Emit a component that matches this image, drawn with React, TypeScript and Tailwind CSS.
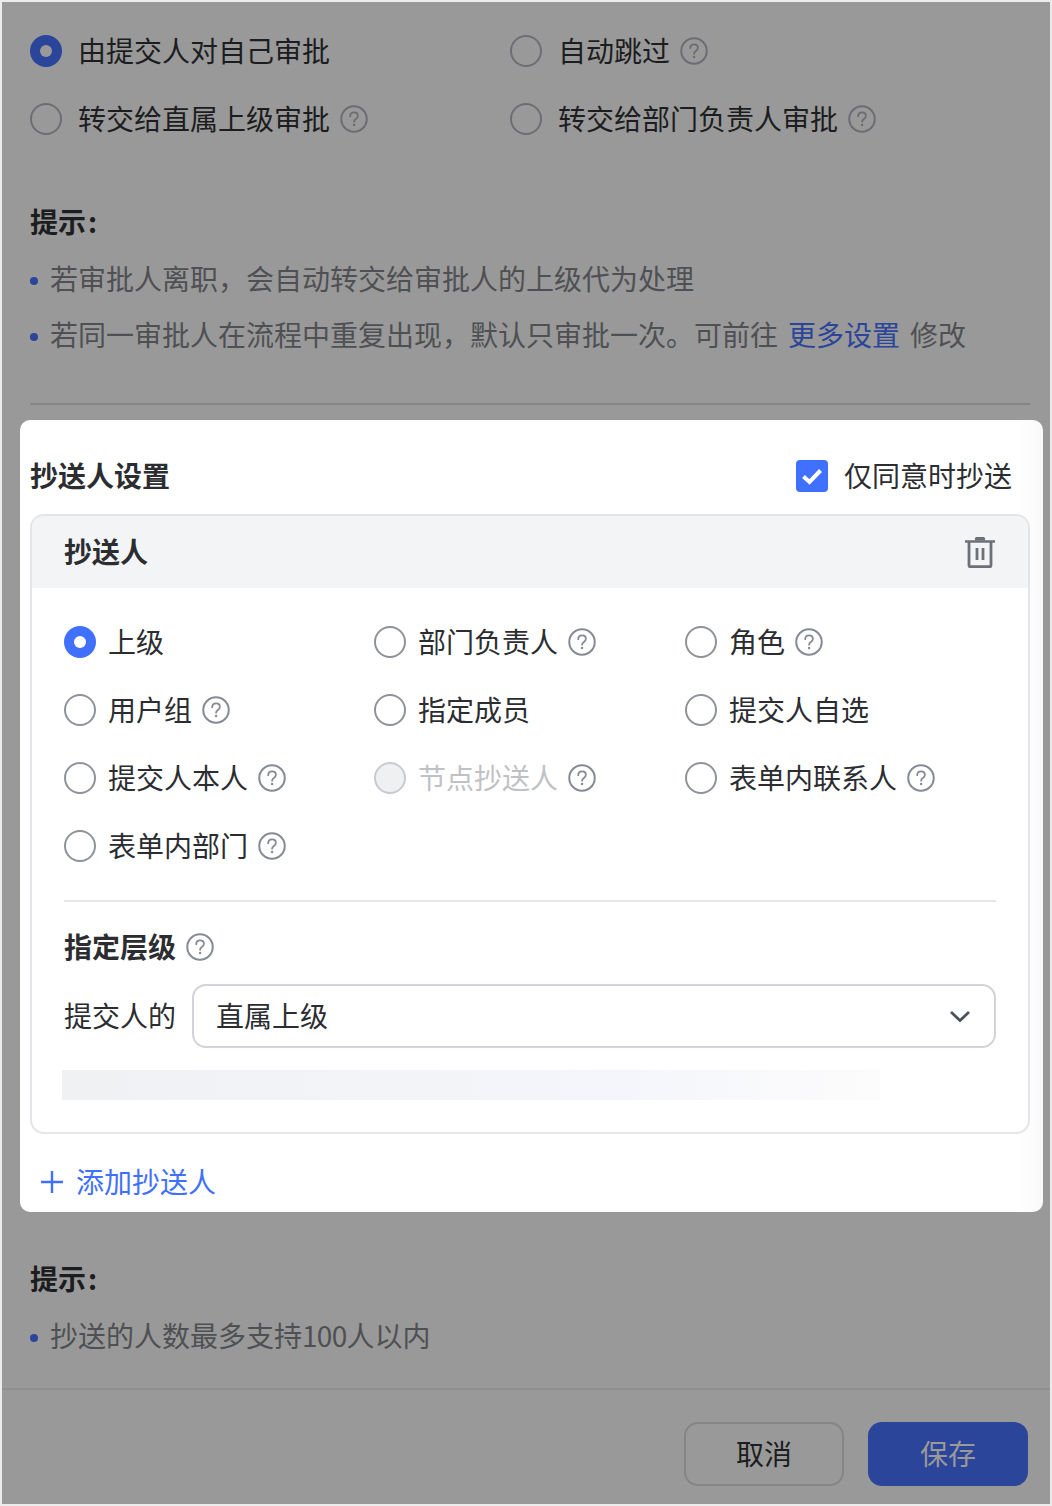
import React from "react";

const Help = ({ color = "#868a94" }: { color?: string }) => (
  <svg width="28" height="28" viewBox="0 0 28 28" fill="none" className="shrink-0">
    <circle cx="14" cy="14" r="12.75" stroke={color} strokeWidth="2" />
    <path d="M10.2 11.2c0-2.3 1.7-3.8 3.9-3.8s3.8 1.4 3.8 3.4c0 1.5-.8 2.3-2 3.1-1.2.8-1.8 1.4-1.8 2.8" stroke={color} strokeWidth="1.8" strokeLinecap="round" />
    <circle cx="14.1" cy="20" r="1.2" fill={color} />
  </svg>
);

const DimOption = ({ label, checked, help, width }: { label: string; checked?: boolean; help?: boolean; width: string }) => (
  <div className={`flex h-[68px] items-center ${width}`}>
    {checked ? (
      <span className="flex h-8 w-8 shrink-0 items-center justify-center rounded-full bg-[#2a4599]">
        <span className="h-3 w-3 rounded-full bg-[#999999]" />
      </span>
    ) : (
      <span className="h-8 w-8 shrink-0 rounded-full border-2 border-[#6c6e73]" />
    )}
    <span className="ml-[16px] pb-[3px] text-[28px] text-[#1c1d20]">{label}</span>
    {help && <span className="ml-[10px] flex"><Help color="#6b6d72" /></span>}
  </div>
);

const Option = ({ label, checked, help, disabled }: { label: string; checked?: boolean; help?: boolean; disabled?: boolean }) => (
  <div className="flex h-[68px] items-center">
    {checked ? (
      <span className="flex h-8 w-8 shrink-0 items-center justify-center rounded-full bg-[#4070ff]">
        <span className="h-3 w-3 rounded-full bg-white" />
      </span>
    ) : disabled ? (
      <span className="h-8 w-8 shrink-0 rounded-full border-2 border-[#c8cad0] bg-[#eff0f2]" />
    ) : (
      <span className="h-8 w-8 shrink-0 rounded-full border-2 border-[#8f9299]" />
    )}
    <span className={`ml-[12px] pb-[3px] text-[28px] ${disabled ? "text-[#bfc1c6]" : "text-[#2b2d31]"}`}>{label}</span>
    {help && <span className="ml-[10px] flex"><Help /></span>}
  </div>
);

const Bullet = ({ children }: { children: React.ReactNode }) => (
  <div className="flex h-[56px] items-center text-[28px] text-[#4f5053]">
    <span className="mr-[12px] mt-[3px] h-2 w-2 shrink-0 rounded-full bg-[#2a4599]" />
    <span className="pb-[3px]">{children}</span>
  </div>
);

export default function App() {
  return (
    <div
      className="h-[1506px] w-[1052px] overflow-hidden border-2 border-[#ececec] bg-[#999999]"
      style={{ fontFamily: '"Noto Sans CJK SC", "Noto Sans", sans-serif' }}
    >
      <div className="px-[28px] pt-[15px]">
        <div className="flex">
          <DimOption label="由提交人对自己审批" checked width="w-[480px]" />
          <DimOption label="自动跳过" help width="w-[500px]" />
        </div>
        <div className="flex">
          <DimOption label="转交给直属上级审批" help width="w-[480px]" />
          <DimOption label="转交给部门负责人审批" help width="w-[500px]" />
        </div>
        <div className="mt-[49px] flex h-10 items-center pb-[3px] text-[28px] font-bold text-[#1c1d20]">
          提示<span className="ml-[2px]">:</span>
        </div>
        <div className="mt-[9px]">
          <Bullet>若审批人离职，会自动转交给审批人的上级代为处理</Bullet>
          <Bullet>
            若同一审批人在流程中重复出现，默认只审批一次。可前往
            <span className="ml-[10px] text-[#2a4599]">更多设置</span>
            <span className="ml-[10px]">修改</span>
          </Bullet>
        </div>
        <div className="mt-[40px] h-[2px] w-[1000px] bg-[#858585]" />
      </div>

      <div className="ml-[18px] mt-[15px] h-[792px] w-[1023px] rounded-[10px] bg-linear-to-r from-white from-[97%] to-[#fafafa] pl-[10px] pt-[36px]">
        <div className="flex h-10 w-[982px] items-center justify-between">
          <span className="pb-[3px] text-[28px] font-bold text-[#2b2d31]">抄送人设置</span>
          <span className="flex items-center">
            <span className="flex h-8 w-8 items-center justify-center rounded-[4px] bg-[#4070ff]">
              <svg width="20" height="17" viewBox="0 0 20 17" fill="none">
                <path d="M1.5 8.5 7.5 14 18.5 2.5" stroke="white" strokeWidth="4" />
              </svg>
            </span>
            <span className="ml-4 pb-[3px] text-[28px] text-[#2b2d31]">仅同意时抄送</span>
          </span>
        </div>

        <div className="mt-[18px] h-[620px] w-[1000px] overflow-hidden rounded-[14px] border-2 border-[#e4e5e8] bg-white">
          <div className="flex h-[72px] items-center justify-between bg-[#f3f4f6] pl-[32px] pr-[33px]">
            <span className="pb-[3px] text-[28px] font-bold text-[#2b2d31]">抄送人</span>
            <svg width="30" height="32" viewBox="0 0 30 32" fill="none">
              <path d="M0 5.5h30" stroke="#6b7079" strokeWidth="2.6" />
              <path d="M10 4.5V2.6C10 1.7 10.7 1 11.6 1h6.8c.9 0 1.6.7 1.6 1.6v1.9z" fill="#6b7079" />
              <path d="M4 6v23.2c0 .9.7 1.5 1.5 1.5h19c.8 0 1.5-.6 1.5-1.5V6" stroke="#6b7079" strokeWidth="2.8" />
              <path d="M12 12v12M18 12v12" stroke="#6b7079" strokeWidth="2.8" />
            </svg>
          </div>

          <div className="px-[32px] pt-[20px]">
            <div className="grid grid-cols-[310px_311px_1fr]">
              <Option label="上级" checked />
              <Option label="部门负责人" help />
              <Option label="角色" help />
              <Option label="用户组" help />
              <Option label="指定成员" />
              <Option label="提交人自选" />
              <Option label="提交人本人" help />
              <Option label="节点抄送人" help disabled />
              <Option label="表单内联系人" help />
              <Option label="表单内部门" help />
            </div>

            <div className="mt-[20px] h-[2px] bg-[#e4e5e8]" />

            <div className="mt-[25px] flex h-10 items-center">
              <span className="pb-[3px] text-[28px] font-bold text-[#2b2d31]">指定层级</span>
              <span className="ml-[10px] flex"><Help /></span>
            </div>

            <div className="mt-[17px] flex items-center">
              <span className="w-[128px] shrink-0 pb-[3px] text-[28px] text-[#2b2d31]">提交人的</span>
              <div className="flex h-16 flex-1 items-center justify-between rounded-[14px] border-2 border-[#d2d4d9] pl-[22px] pr-[23px]">
                <span className="pb-[3px] text-[28px] text-[#2b2d31]">直属上级</span>
                <svg width="22" height="14" viewBox="0 0 22 14" fill="none">
                  <path d="M2 3l9 8.5L20 3" stroke="#4f535b" strokeWidth="2.8" />
                </svg>
              </div>
            </div>

            <div className="-ml-[2px] mt-[22px] h-[30px] w-[818px] bg-linear-to-r from-[#f0f1f3] via-[#f5f6fb] via-70% to-[#fcfcfc]" />
          </div>
        </div>

        <div className="mt-[28px] flex h-10 items-center pl-[10px] text-[28px] text-[#4070ff]">
          <svg width="24" height="24" viewBox="0 0 24 24" fill="none">
            <path d="M12 1v22M1 12h22" stroke="#4070ff" strokeWidth="2.4" />
          </svg>
          <span className="ml-[12px] pb-[3px]">添加抄送人</span>
        </div>
      </div>

      <div className="px-[28px]">
        <div className="mt-[47px] flex h-10 items-center pb-[3px] text-[28px] font-bold text-[#1c1d20]">
          提示<span className="ml-[2px]">:</span>
        </div>
        <div className="mt-[9px]">
          <Bullet>
            抄送的人数最多支持<span className="tracking-[-0.7px]">100</span>人以内
          </Bullet>
        </div>
      </div>

      <div className="mt-[24px] h-[2px] bg-[#8f8f8f]" />
      <div className="mt-[32px] flex justify-end gap-6 pr-[22px]">
        <button className="flex h-16 w-40 items-center justify-center rounded-[14px] border-2 border-[#858585] pb-[3px] text-[28px] text-[#1c1d20]">取消</button>
        <button className="flex h-16 w-40 items-center justify-center rounded-[14px] bg-[#2a4599] pb-[3px] text-[28px] text-[#999999]">保存</button>
      </div>
    </div>
  );
}
